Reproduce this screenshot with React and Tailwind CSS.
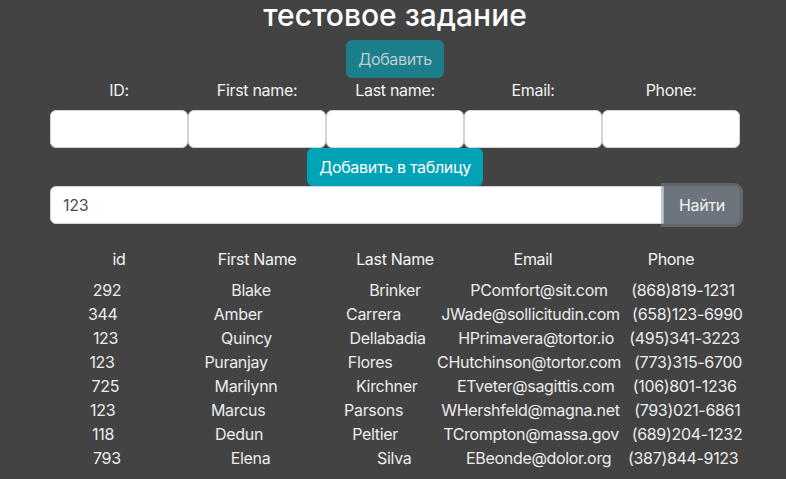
const fields = ['ID:', 'First name:', 'Last name:', 'Email:', 'Phone:'];
const heads = ['id', 'First Name', 'Last Name', 'Email', 'Phone'];

const rows = [
  ['292', 'Blake', 'Brinker', 'PComfort@sit.com', '(868)819-1231'],
  ['344', 'Amber', 'Carrera', 'JWade@sollicitudin.com', '(658)123-6990'],
  ['123', 'Quincy', 'Dellabadia', 'HPrimavera@tortor.io', '(495)341-3223'],
  ['123', 'Puranjay', 'Flores', 'CHutchinson@tortor.com', '(773)315-6700'],
  ['725', 'Marilynn', 'Kirchner', 'ETveter@sagittis.com', '(106)801-1236'],
  ['123', 'Marcus', 'Parsons', 'WHershfeld@magna.net', '(793)021-6861'],
  ['118', 'Dedun', 'Peltier', 'TCrompton@massa.gov', '(689)204-1232'],
  ['793', 'Elena', 'Silva', 'EBeonde@dolor.org', '(387)844-9123'],
];

export default function App() {
  return (
    <div
      className="min-h-[479px] overflow-hidden bg-[#434343] text-base tracking-[-0.02em] text-white"
      style={{ fontFamily: 'Inter, "Noto Sans", sans-serif' }}
    >
      <div className="ml-[35px] flex w-[720px] flex-col items-center">
        <h1 className="text-[30px] font-medium leading-[30px] tracking-normal text-white">тестовое задание</h1>

        <button
          disabled
          className="mt-[10px] h-[38px] rounded-md bg-[#1c7f8b] px-3 leading-6 text-[#bccdd0]"
        >
          Добавить
        </button>

        <div className="w-full px-[15px]">
          <div className="grid grid-cols-5">
            {fields.map((f) => (
              <div key={f} className="flex flex-col">
                <label className="mb-2 text-center leading-6 text-[#f2f2f2]">{f}</label>
                <input className="h-[38px] w-full rounded-md border border-[#ced4da] bg-white px-3 text-[#495057] outline-none" />
              </div>
            ))}
          </div>

          <div className="flex justify-center">
            <button className="h-[38px] rounded-md bg-[#00a4b6] px-3 leading-6 text-white">
              Добавить в таблицу
            </button>
          </div>

          <div className="flex">
            <input
              defaultValue="123"
              className="h-[38px] flex-1 rounded-l-md border border-[#ced4da] bg-white px-3 text-[#495057] outline-none"
            />
            <button className="relative z-10 h-[38px] w-[76px] rounded-r-md bg-[#6c757d] leading-6 text-[#f4f4f4] shadow-[0_0_0_3px_rgba(130,138,145,0.5)]">
              Найти
            </button>
          </div>

          <div className="mt-[23px] grid grid-cols-5 leading-6">
            {heads.map((h) => (
              <div key={h} className="text-center text-[#f4f4f4]">
                {h}
              </div>
            ))}
          </div>
        </div>

        <div className="mt-[7px] w-full">
          {rows.map((r, i) => (
            <div key={i} className="flex leading-6 text-[#ececec]">
              {r.map((c, j) => (
                <div key={j} className="flex-1 whitespace-nowrap text-center">
                  {c}
                </div>
              ))}
            </div>
          ))}
        </div>
      </div>
    </div>
  );
}
